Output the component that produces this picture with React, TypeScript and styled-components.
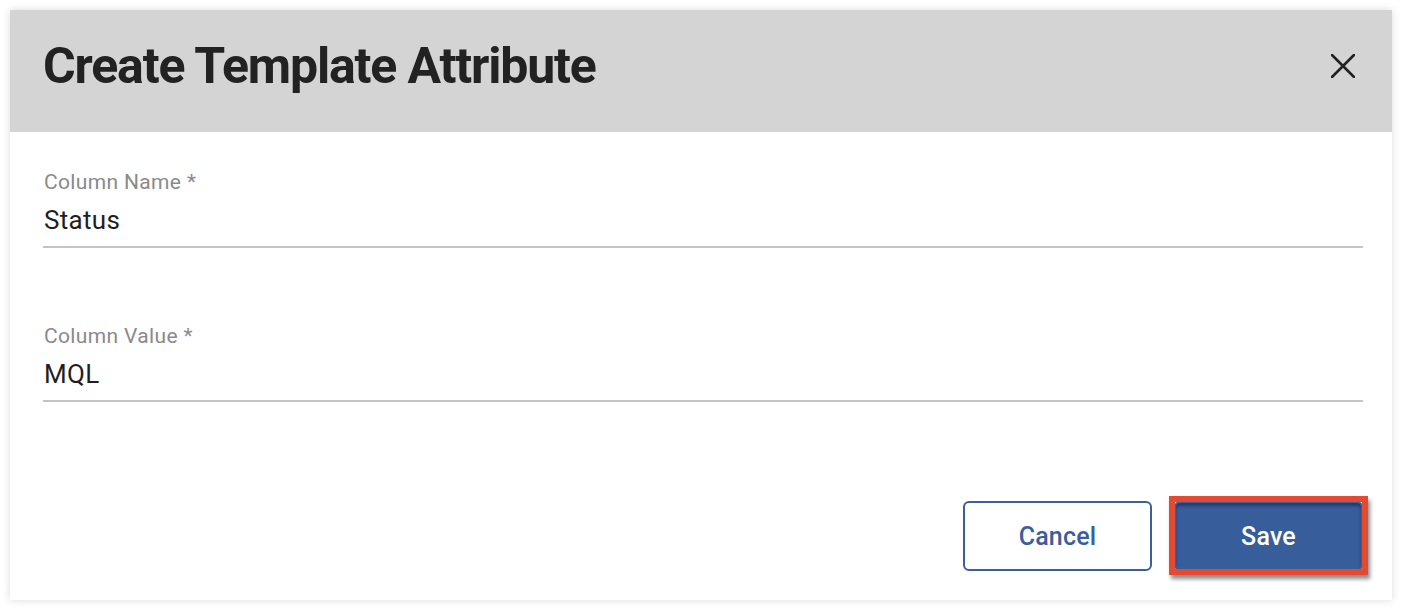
import React from "react";
import styled, { createGlobalStyle } from "styled-components";

const Global = createGlobalStyle`
  html, body { margin: 0; padding: 0; background: #ffffff; }
  body { font-family: Roboto, "Liberation Sans", Arial, sans-serif; }
  * { box-sizing: border-box; }
`;

const Page = styled.div`
  width: 1402px;
  height: 610px;
  padding: 10px;
  background: #ffffff;
`;

const Dialog = styled.div`
  width: 1382px;
  height: 590px;
  background: #ffffff;
  box-shadow: 0 0 8px rgba(0, 0, 0, 0.14);
  display: flex;
  flex-direction: column;
`;

const Header = styled.div`
  height: 122px;
  background: #d4d4d4;
  display: flex;
  align-items: center;
  justify-content: space-between;
  padding: 0 36px 0 33px;
`;

const Title = styled.h1`
  margin: 0;
  font-family: Roboto, "Liberation Sans", sans-serif;
  font-weight: 700;
  font-size: 50px;
  color: #222222;
  letter-spacing: -1.15px;
  padding-bottom: 10px;
`;

const CloseButton = styled.button`
  border: 0;
  background: transparent;
  padding: 0;
  width: 26px;
  height: 26px;
  display: flex;
  align-items: center;
  justify-content: center;
  margin-bottom: 10px;
  cursor: pointer;
`;

const Body = styled.div`
  flex: 1;
  display: flex;
  flex-direction: column;
  padding: 38px 29px 29px 33px;
`;

const Field = styled.div<{ $gap: number }>`
  display: flex;
  flex-direction: column;
  margin-bottom: ${(p) => p.$gap}px;
`;

const Label = styled.label`
  font-size: 21px;
  color: #8a8a8a;
  line-height: 24px;
  letter-spacing: 0.35px;
  padding-left: 1px;
`;

const Value = styled.div`
  font-size: 26px;
  color: #1f1f1f;
  line-height: 30px;
  letter-spacing: 0.3px;
  margin-top: 11px;
  padding-left: 1px;
  padding-bottom: 11px;
  border-bottom: 2px solid #c4c4c4;
`;

const Actions = styled.div`
  margin-top: auto;
  display: flex;
  justify-content: flex-end;
  gap: 22px;
`;

const Button = styled.button<{ $primary?: boolean }>`
  position: relative;
  width: 189px;
  height: 70px;
  border-radius: 6px;
  font-family: Roboto, "Liberation Sans", sans-serif;
  font-size: 25px;
  font-weight: 500;
  letter-spacing: 0.2px;
  cursor: pointer;
  border: 2px solid #3a5e9f;
  color: ${(p) => (p.$primary ? "#ffffff" : "#3a5e9f")};
  background: ${(p) => (p.$primary ? "#385d9b" : "#ffffff")};
  box-shadow: ${(p) => (p.$primary ? "inset 0 3px 3px rgba(0,0,0,0.35)" : "none")};
`;

const Highlight = styled.span`
  position: absolute;
  inset: -7px -7px -6px -7px;
  border: 6px solid #e34a32;
  box-shadow: 2px 4px 4px rgba(0, 0, 0, 0.45);
  pointer-events: none;
`;

export default function App() {
  return (
    <>
      <Global />
      <Page>
        <Dialog>
          <Header>
            <Title>Create Template Attribute</Title>
            <CloseButton aria-label="Close">
              <svg width="24" height="24" viewBox="0 0 24 24">
                <path d="M1 1 L23 23 M23 1 L1 23" stroke="#222" strokeWidth="2.6" strokeLinecap="round" />
              </svg>
            </CloseButton>
          </Header>
          <Body>
            <Field $gap={76}>
              <Label>Column Name *</Label>
              <Value>Status</Value>
            </Field>
            <Field $gap={0}>
              <Label>Column Value *</Label>
              <Value>MQL</Value>
            </Field>
            <Actions>
              <Button>Cancel</Button>
              <Button $primary>
                Save
                <Highlight />
              </Button>
            </Actions>
          </Body>
        </Dialog>
      </Page>
    </>
  );
}
